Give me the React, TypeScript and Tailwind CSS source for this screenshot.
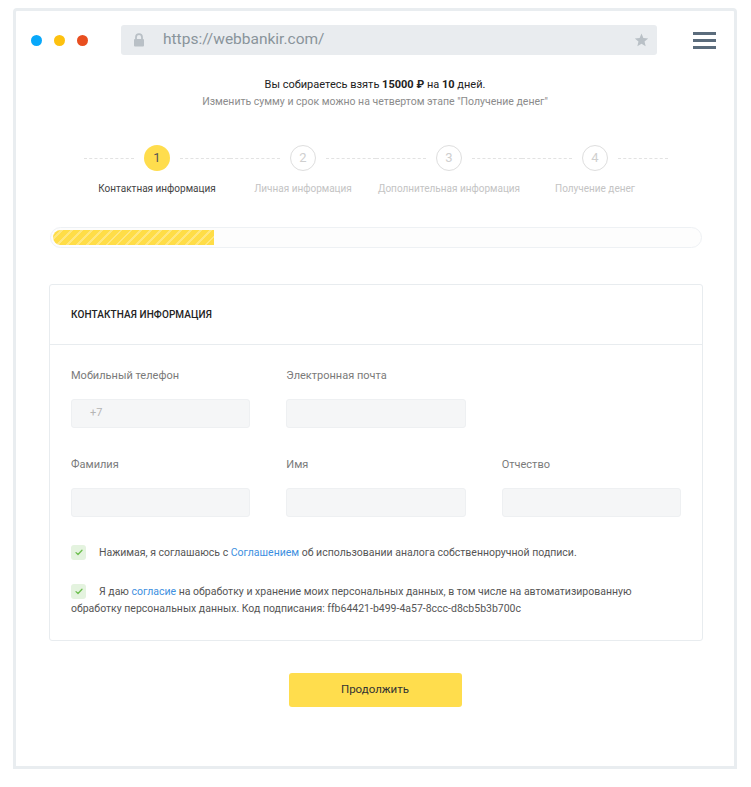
import React from "react";

const steps = [
  "Контактная информация",
  "Личная информация",
  "Дополнительная информация",
  "Получение денег",
];

function Check() {
  return (
    <span className="inline-block relative top-[-1px] w-[15px] h-[15px] mr-[13px] rounded-[3px] bg-[#e4f3df] align-middle">
      <svg className="absolute left-[4px] top-[4px]" width="8" height="7" viewBox="0 0 8 7" fill="none">
        <path d="M1 3.6 L3 5.5 L7 1.2" stroke="#6dbf4e" strokeWidth="1.3" strokeLinecap="round" strokeLinejoin="round" />
      </svg>
    </span>
  );
}

function Field({ label, placeholder }: { label: string; placeholder?: string }) {
  return (
    <div className="flex flex-col">
      <div className="text-[11px] leading-[16px] text-[#7a7a7a]">{label}</div>
      <div className="mt-[15px] h-[29px] rounded-[3px] bg-[#f5f6f7] border border-[#eef0f2] flex items-center pl-[18px] text-[11px] text-[#b5b5b5]">
        {placeholder}
      </div>
    </div>
  );
}

export default function App() {
  return (
    <div className="w-[751px] h-[787px] bg-white" style={{ fontFamily: "Roboto, 'Noto Sans', sans-serif" }}>
      <div className="pt-[8px] pl-[13px]">
        <div className="w-[724px] h-[761px] border-[3px] border-[#e9edf0] rounded-t-[4px] bg-white flex flex-col">
          {/* browser bar */}
          <div className="flex items-center mt-[14px] h-[30px]">
            <div className="flex items-center gap-[12px] ml-[15px]">
              <span className="w-[11px] h-[11px] rounded-full bg-[#08a8fa]" />
              <span className="w-[11px] h-[11px] rounded-full bg-[#fdc10f]" />
              <span className="w-[11px] h-[11px] rounded-full bg-[#e84e1f]" />
            </div>
            <div className="ml-[33px] w-[536px] h-[30px] rounded-[3px] bg-[#e9ecef] flex items-center">
              <svg className="ml-[12px]" width="12" height="14" viewBox="0 0 12 14">
                <path d="M3 6 V4.2 A3 3 0 0 1 9 4.2 V6" stroke="#b9c0c6" strokeWidth="1.8" fill="none" />
                <rect x="1" y="6" width="10" height="7.5" rx="1" fill="#b9c0c6" />
              </svg>
              <span className="ml-[18px] text-[15.5px] text-[#8a949b]">https://webbankir.com/</span>
              <svg className="ml-auto mr-[8px]" width="15" height="14" viewBox="0 0 24 23">
                <path d="M12 1 L15.1 8.2 L23 8.9 L17 14.1 L18.8 21.8 L12 17.7 L5.2 21.8 L7 14.1 L1 8.9 L8.9 8.2 Z" fill="#b9c0c6" />
              </svg>
            </div>
            <div className="ml-[36px] flex flex-col gap-[4px]">
              <span className="block w-[23px] h-[3px] bg-[#5b6c7c]" />
              <span className="block w-[23px] h-[3px] bg-[#5b6c7c]" />
              <span className="block w-[23px] h-[3px] bg-[#5b6c7c]" />
            </div>
          </div>

          {/* info text */}
          <div className="mt-[21px] text-center leading-[17px]">
            <div className="text-[11px] text-[#222]">
              Вы собираетесь взять <b className="font-bold">15000 ₽</b> на <b className="font-bold">10</b> дней.
            </div>
            <div className="text-[10.5px] text-[#8c8c8c]">Изменить сумму и срок можно на четвертом этапе "Получение денег"</div>
          </div>

          {/* steps */}
          <div className="mt-[35px] ml-[68px] w-[584px] grid grid-cols-4">
            {steps.map((s, i) => (
              <div key={s} className="flex flex-col items-center">
                <div className="w-full flex items-center">
                  <div className="flex-1 border-t border-dashed border-[#e2e2e2]" />
                  <div
                    className={
                      i === 0
                        ? "mx-[10px] w-[26px] h-[26px] rounded-full bg-[#ffdd4d] flex items-center justify-center text-[13px] text-[#555]"
                        : "mx-[10px] w-[26px] h-[26px] rounded-full border-[1.5px] border-[#dedede] flex items-center justify-center text-[13px] text-[#cfcfcf]"
                    }
                  >
                    {i + 1}
                  </div>
                  <div className="flex-1 border-t border-dashed border-[#e2e2e2]" />
                </div>
                <div
                  className={
                    i === 0
                      ? "mt-[11px] whitespace-nowrap text-[10px] leading-[14px] text-[#444]"
                      : "mt-[11px] whitespace-nowrap text-[10px] leading-[14px] text-[#c4c4c4]"
                  }
                >
                  {s}
                </div>
              </div>
            ))}
          </div>

          {/* progress */}
          <div className="mt-[31px] ml-[34px] w-[652px] h-[21px] rounded-full border border-[#eef1f4] bg-[#fdfdfd] p-[2px]">
            <div className="h-[15px] w-[161px] rounded-l-full bg-[repeating-linear-gradient(-45deg,#ffdd47_0px,#ffdd47_5px,#ffe77f_5px,#ffe77f_7px)]" />
          </div>

          {/* card */}
          <div className="mt-[36px] ml-[33px] w-[654px] border border-[#e8ecef] rounded-[3px]">
            <div className="h-[60px] flex items-center px-[21px] border-b border-[#e8ecef]">
              <span className="text-[10px] font-medium text-[#222] tracking-[0.1px]">КОНТАКТНАЯ ИНФОРМАЦИЯ</span>
            </div>
            <div className="px-[21px] pt-[23px] pb-[23px]">
              <div className="grid grid-cols-3 gap-x-[36px]">
                <Field label="Мобильный телефон" placeholder="+7" />
                <Field label="Электронная почта" />
                <div />
              </div>
              <div className="mt-[29px] grid grid-cols-3 gap-x-[36px]">
                <Field label="Фамилия" />
                <Field label="Имя" />
                <Field label="Отчество" />
              </div>
              <p className="mt-[27px] text-[10.5px] leading-[17px] text-[#555]">
                <Check />
                Нажимая, я соглашаюсь с <span className="text-[#3d8fe0]">Соглашением</span> об использовании аналога собственноручной подписи.
              </p>
              <p className="mt-[22px] text-[10.5px] leading-[17px] text-[#555] pr-[40px]">
                <Check />
                Я даю <span className="text-[#3d8fe0]">согласие</span> на обработку и хранение моих персональных данных, в том числе на автоматизированную обработку персональных данных. Код подписания: ffb64421-b499-4a57-8ccc-d8cb5b3b700c
              </p>
            </div>
          </div>

          {/* button */}
          <div className="mt-[32px] flex justify-center">
            <button className="w-[173px] h-[34px] rounded-[3px] bg-[#ffdd4d] text-[11.5px] text-[#333]">Продолжить</button>
          </div>
        </div>
      </div>
    </div>
  );
}
